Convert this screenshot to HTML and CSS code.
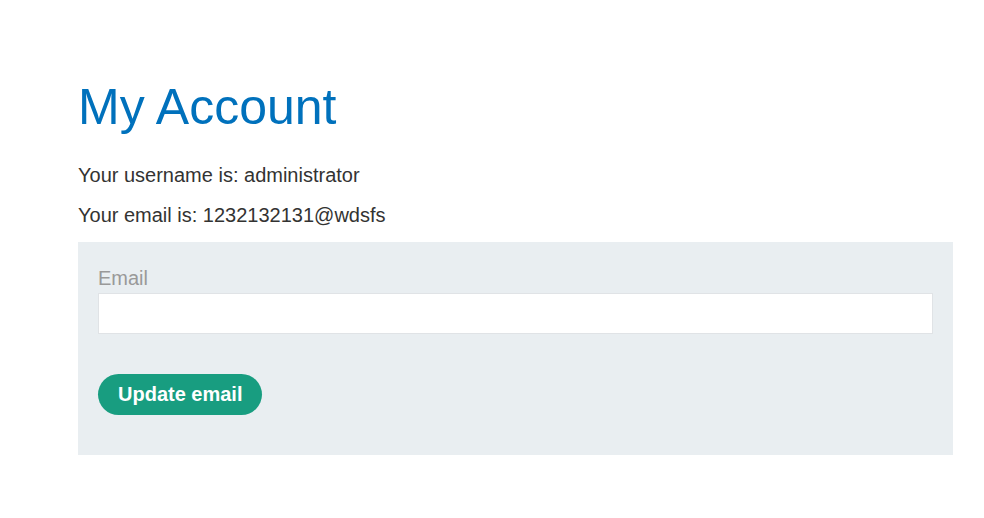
FILE: index.html
```html
<!DOCTYPE html>
<html>
<head>
<meta charset="utf-8">
<link rel="stylesheet" href="styles.css">
</head>
<body>
<div class="container">
  <h1 class="title">My Account</h1>
  <p class="info">Your username is: administrator</p>
  <p class="info">Your email is: 1232132131@wdsfs</p>
  <form class="login-form">
    <label class="label">Email</label>
    <input class="field" type="email" name="email">
    <button class="button" type="button">Update email</button>
  </form>
</div>
</body>
</html>
```
FILE: styles.css
```css
html, body {
  margin: 0;
  padding: 0;
  background: #ffffff;
}
body {
  font-family: "Liberation Sans", Arial, sans-serif;
  color: #333332;
}
.container {
  padding: 78px 31px 0 78px;
}
.title {
  margin: 0;
  font-size: 50px;
  font-weight: normal;
  color: #0071bc;
  line-height: 58px;
}
.info {
  margin: 0;
  font-size: 20px;
  line-height: 40px;
}
.info:first-of-type {
  margin-top: 19px;
}
.login-form {
  display: flex;
  flex-direction: column;
  align-items: flex-start;
  background: #e9eef1;
  padding: 22px 20px 40px 20px;
  margin-top: 7px;
}
.label {
  font-size: 20px;
  color: #999999;
  line-height: 29px;
}
.field {
  box-sizing: border-box;
  width: 100%;
  height: 41px;
  border: 1px solid #e0e3e6;
  background: #ffffff;
  margin: 0;
  padding: 0 8px;
  font-size: 18px;
}
.button {
  margin-top: 40px;
  height: 41px;
  padding: 0 20px;
  border: none;
  border-radius: 21px;
  background: #189d80;
  color: #ffffff;
  font-family: "Liberation Sans", Arial, sans-serif;
  font-weight: bold;
  font-size: 20px;
}
```
